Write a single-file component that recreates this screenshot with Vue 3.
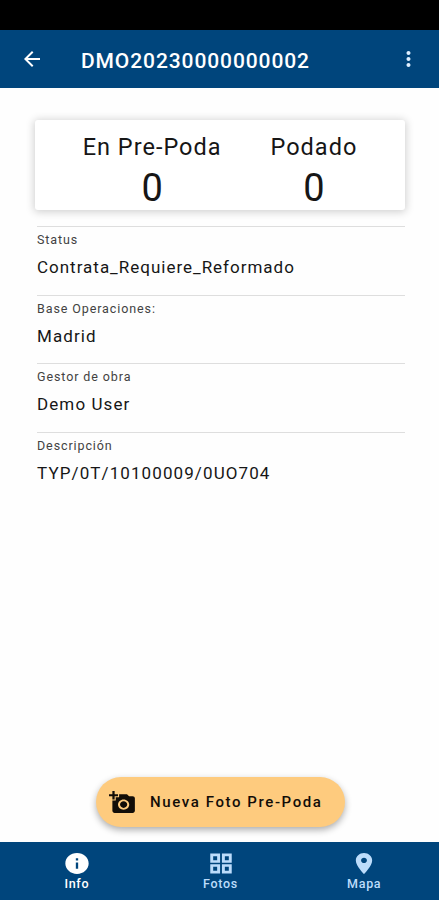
<script setup>
import { ref } from 'vue'

const counters = [
  { id: 'pre', label: 'En Pre-Poda', value: 0 },
  { id: 'done', label: 'Podado', value: 0 }
]

const fields = [
  { id: 'status', label: 'Status', value: 'Contrata_Requiere_Reformado' },
  { id: 'base', label: 'Base Operaciones:', value: 'Madrid' },
  { id: 'gestor', label: 'Gestor de obra', value: 'Demo User' },
  { id: 'desc', label: 'Descripción', value: 'TYP/0T/10100009/0UO704' }
]

const tabs = [
  {
    id: 'info',
    label: 'Info',
    path: 'M12 2C6.48 2 2 6.48 2 12s4.48 10 10 10 10-4.48 10-10S17.52 2 12 2zm1 15h-2v-6h2v6zm0-8h-2V7h2v2z'
  },
  {
    id: 'fotos',
    label: 'Fotos',
    path: 'M2.8 2.5v8.8h8.4V2.5H2.8zm5.9 6.3H5.3V5h3.4v3.8zM2.8 12.7v8.8h8.4v-8.8H2.8zM8.7 19H5.3v-3.8h3.4V19zm4.1-16.5v8.8h8.4V2.5h-8.4zm5.9 6.3h-3.4V5h3.4v3.8zm-5.9 3.9v8.8h8.4v-8.8h-8.4zm5.9 6.3h-3.4v-3.8h3.4V19z'
  },
  {
    id: 'mapa',
    label: 'Mapa',
    path: 'M12 2C8.13 2 5 5.13 5 9c0 5.25 7 13 7 13s7-7.75 7-13c0-3.87-3.13-7-7-7zm0 9.5c-1.38 0-2.5-1.12-2.5-2.5s1.12-2.5 2.5-2.5 2.5 1.12 2.5 2.5-1.12 2.5-2.5 2.5z'
  }
]

const currentTab = ref('info')
</script>

<template>
  <div class="screen">
    <div class="status-bar"></div>

    <header class="app-bar">
      <button class="icon-btn" aria-label="Volver">
        <svg class="back" viewBox="0 0 24 24">
          <path d="M20 11H7.83l5.59-5.59L12 4l-8 8 8 8 1.41-1.41L7.83 13H20v-2z" />
        </svg>
      </button>
      <h1 class="title">DMO20230000000002</h1>
      <button class="icon-btn" aria-label="Menú">
        <svg class="more" viewBox="0 0 24 24">
          <path d="M12 8c1.1 0 2-.9 2-2s-.9-2-2-2-2 .9-2 2 .9 2 2 2zm0 2c-1.1 0-2 .9-2 2s.9 2 2 2 2-.9 2-2-.9-2-2-2zm0 6c-1.1 0-2 .9-2 2s.9 2 2 2 2-.9 2-2-.9-2-2-2z" />
        </svg>
      </button>
    </header>

    <main class="content">
      <section class="card">
        <div v-for="item in counters" :key="item.id" class="counter">
          <span class="counter-label">{{ item.label }}</span>
          <span class="counter-value">{{ item.value }}</span>
        </div>
      </section>

      <section class="fields">
        <div v-for="field in fields" :key="field.id" class="field">
          <span class="field-label">{{ field.label }}</span>
          <span class="field-value" :class="field.id">{{ field.value }}</span>
        </div>
      </section>

      <button class="fab">
        <svg class="camera" viewBox="0 0 24 24" preserveAspectRatio="none">
          <path d="M3 4V1h2v3h3v2H5v3H3V6H0V4h3zm3 6V7h3V4h7l1.83 2H21c1.1 0 2 .9 2 2v12c0 1.1-.9 2-2 2H5c-1.1 0-2-.9-2-2V10h3zm7 9c2.76 0 5-2.24 5-5s-2.24-5-5-5-5 2.24-5 5 2.24 5 5 5zm-3.2-5c0 1.77 1.43 3.2 3.2 3.2s3.2-1.43 3.2-3.2-1.43-3.2-3.2-3.2-3.2 1.43-3.2 3.2z" />
        </svg>
        <span>Nueva Foto Pre-Poda</span>
      </button>
    </main>

    <nav class="tab-bar">
      <button
        v-for="tab in tabs"
        :key="tab.id"
        class="tab"
        :class="{ active: currentTab === tab.id }"
        @click="currentTab = tab.id"
      >
        <svg viewBox="0 0 24 24" preserveAspectRatio="none"><path :d="tab.path" /></svg>
        <span>{{ tab.label }}</span>
      </button>
    </nav>
  </div>
</template>

<style>
body {
  margin: 0;
  background: #fff;
}
</style>

<style scoped>
.screen {
  height: 100vh;
  display: flex;
  flex-direction: column;
  overflow: hidden;
  background: #fefefe;
  color: #161616;
  font-family: Roboto, "Liberation Sans", sans-serif;
}

button {
  margin: 0;
  padding: 0;
  background: none;
  border: none;
  color: inherit;
  font-family: inherit;
  cursor: pointer;
}

svg {
  display: block;
  fill: currentColor;
}

.status-bar {
  height: 30px;
  flex-shrink: 0;
  background: #000;
}

.app-bar {
  height: 58px;
  flex-shrink: 0;
  display: flex;
  align-items: center;
  padding: 0 18px 0 19px;
  background: #00457c;
  color: #fff;
}

.icon-btn {
  flex-shrink: 0;
}

.back {
  width: 26px;
  height: 24px;
}

.more {
  width: 25px;
  height: 24px;
  color: #dfefff;
}

.title {
  flex: 1;
  margin: 3px 0 0 36px;
  font-size: 21px;
  line-height: 24px;
  font-weight: 500;
  letter-spacing: 0.9px;
}

.content {
  flex: 1;
  display: flex;
  flex-direction: column;
  padding: 32px 34px 15px 35px;
}

.card {
  height: 90px;
  box-sizing: border-box;
  display: flex;
  justify-content: center;
  gap: 49px;
  padding-top: 11px;
  background: #fff;
  border-radius: 3px;
  box-shadow: 0 1px 8px 1px rgba(0, 0, 0, 0.19);
}

.counter {
  display: flex;
  flex-direction: column;
  align-items: center;
}

.counter-label {
  font-size: 23.5px;
  line-height: 32px;
  letter-spacing: 1px;
}

.counter-value {
  font-size: 38px;
  line-height: 50px;
}

.fields {
  margin: 16px 0 0 2px;
}

.field {
  height: 68.6px;
  box-sizing: border-box;
  display: flex;
  flex-direction: column;
  border-top: 1px solid #dedede;
}

.field-label {
  margin-top: 4px;
  font-size: 12.5px;
  line-height: 18px;
  letter-spacing: 0.9px;
  color: #424242;
}

.field-value {
  margin-top: 6px;
  font-size: 17px;
  line-height: 24px;
  letter-spacing: 1.1px;
}

.field-value.status {
  letter-spacing: 0.99px;
}

.fab {
  width: 249px;
  height: 50px;
  margin: auto 0 0 61px;
  padding-left: 13px;
  display: flex;
  align-items: center;
  gap: 14px;
  border-radius: 25px;
  background: #fecb7e;
  color: #120d08;
  box-shadow: 0 3px 7px rgba(0, 0, 0, 0.32);
  font-size: 15px;
  font-weight: 500;
  letter-spacing: 1.6px;
  white-space: nowrap;
}

.camera {
  width: 27px;
  height: 25px;
}

.tab-bar {
  height: 58px;
  flex-shrink: 0;
  box-sizing: border-box;
  display: flex;
  padding: 9px 3px 0 5px;
  background: #00457c;
  color: #bcdcfb;
}

.tab {
  flex: 1;
  display: flex;
  flex-direction: column;
  align-items: center;
  font-size: 12.5px;
  line-height: 14px;
  font-weight: 500;
  letter-spacing: 0.7px;
}

.tab svg {
  width: 28px;
  height: 25px;
  margin-bottom: 1px;
}

.tab.active {
  color: #fff;
}
</style>
